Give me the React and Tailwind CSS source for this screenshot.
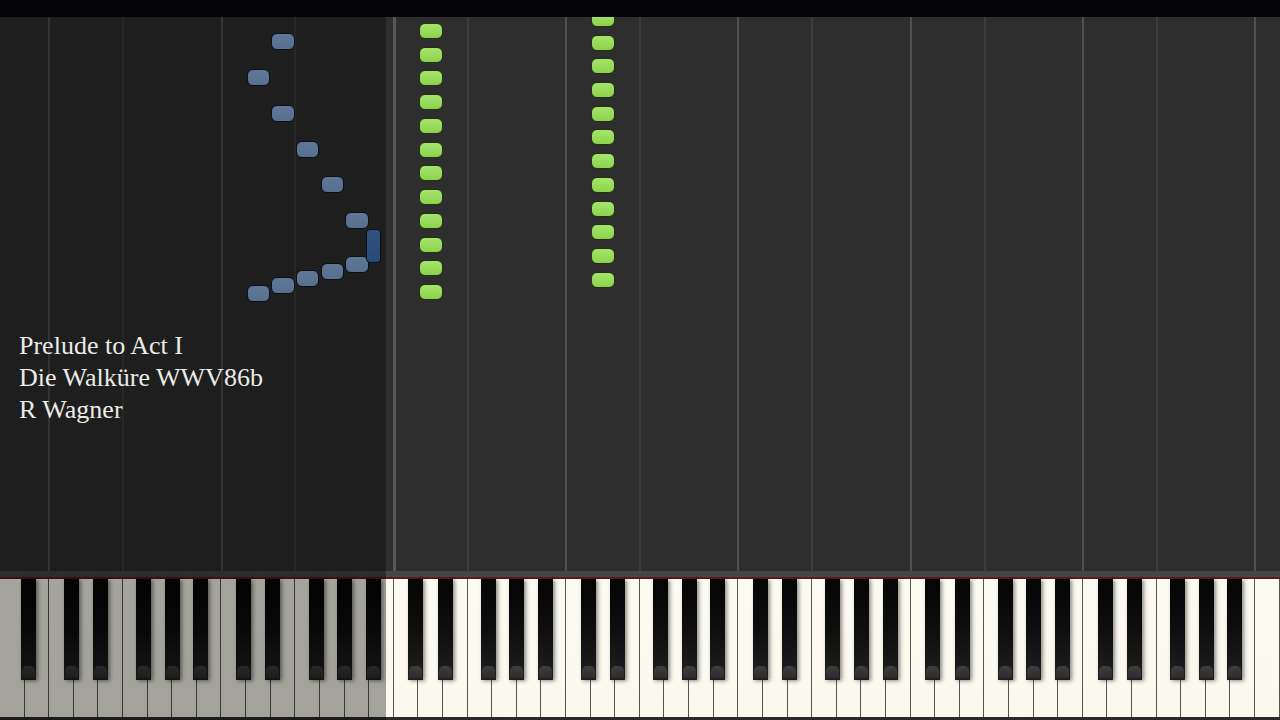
import React from "react";

const W = 1280 / 52;

const blackKeys = (() => {
  const list = [{ b: 1, s: 4 }];
  for (let n = 1; n <= 7; n++) {
    const c = 2 + 7 * (n - 1);
    list.push({ b: c + 1, s: -2.5 }, { b: c + 2, s: 2 }, { b: c + 4, s: -4 }, { b: c + 5, s: 0 }, { b: c + 6, s: 4 });
  }
  return list.map((k) => k.b * W + k.s - 7.5);
})();

const gridLines = (() => {
  const lines = [];
  for (let n = 1; n <= 8; n++) {
    const c = (2 + 7 * (n - 1)) * W;
    lines.push({ x: c, kind: n === 3 ? "m" : "c" });
    if (n <= 7) lines.push({ x: c + 3 * W, kind: "f" });
  }
  return lines;
})();

const PITCH = 23.73;

const greenNotes = [
  ...Array.from({ length: 12 }, (_, k) => ({ idx: 17, top: 6 + PITCH * k })),
  ...Array.from({ length: 12 }, (_, k) => ({ idx: 24, top: 17.5 + PITCH * (k - 1) })),
];

const blueNotes = [
  { idx: 11, top: 16 },
  { idx: 10, top: 52 },
  { idx: 11, top: 88 },
  { idx: 12, top: 124 },
  { idx: 13, top: 159 },
  { idx: 14, top: 195 },
  { idx: 14, top: 239 },
  { idx: 13, top: 246 },
  { idx: 12, top: 253 },
  { idx: 11, top: 260 },
  { idx: 10, top: 268 },
];

const lineClass = {
  c: "absolute top-0 bottom-0 w-[2px] bg-[#4f4f4f]",
  m: "absolute top-0 bottom-0 w-[3px] bg-[#585858]",
  f: "absolute top-0 bottom-0 w-[2px] bg-[#3c3c3c]",
};

function GreenNote({ idx, top }) {
  return (
    <div
      className="absolute h-[16px] rounded-[6px] border border-[#1f3310] bg-gradient-to-b from-[#a6e56c] to-[#8cd24c]"
      style={{ left: idx * W + 0.5, width: W - 1, top }}
    />
  );
}

function BlueNote({ idx, top }) {
  return (
    <div
      className="absolute h-[17px] rounded-[6px] border border-[#121a26] bg-gradient-to-b from-[#92b8e8] to-[#86acdc]"
      style={{ left: idx * W + 0.5, width: W - 1, top }}
    />
  );
}

function BlackKey({ left }) {
  return (
    <div
      className="absolute top-0 flex h-[101px] w-[15px] flex-col justify-end bg-gradient-to-b from-[#050505] via-[#0e0e0e] to-[#202020] px-[1px] pb-[2px] shadow-[2px_1px_4px_rgba(0,0,0,0.45)]"
      style={{ left }}
    >
      <div className="h-[12px] rounded-t-[5px] bg-gradient-to-b from-[#3e3e3e] to-[#2c2c2c]" />
    </div>
  );
}

export default function App() {
  return (
    <div className="relative flex h-[720px] w-[1280px] flex-col overflow-hidden bg-[#2e2e2e]" style={{ fontFamily: '"Liberation Serif", serif' }}>
      <div className="h-[17px] shrink-0 bg-[#050507]" />

      <div className="relative h-[554px] shrink-0 overflow-hidden bg-[#2e2e2e]">
        {gridLines.map((l, i) => (
          <div key={i} className={lineClass[l.kind]} style={{ left: l.x - 1 }} />
        ))}
        {greenNotes.map((n, i) => (
          <GreenNote key={"g" + i} {...n} />
        ))}
        {blueNotes.map((n, i) => (
          <BlueNote key={"b" + i} {...n} />
        ))}
        <div
          className="absolute h-[34px] w-[15px] rounded-[4px] border border-[#0e1522] bg-gradient-to-b from-[#4a7ec4] to-[#3f72b8]"
          style={{ left: 15 * W + 4 - 7.5, top: 212 }}
        />
      </div>

      <div className="h-[6px] shrink-0 bg-[#434747]" />
      <div className="h-[2px] shrink-0 bg-[#5e1a1a]" />
      <div className="relative flex h-[138px] shrink-0">
        {Array.from({ length: 52 }, (_, i) => (
          <div
            key={i}
            className="h-full flex-1 border-r border-[#55554f] bg-gradient-to-b from-[#fdfbf1] to-[#fbf9ee]"
          />
        ))}
        {blackKeys.map((left, i) => (
          <BlackKey key={i} left={left} />
        ))}
      </div>
      <div className="flex-1 bg-[#2a2a2a]" />

      <div className="pointer-events-none absolute left-0 top-[17px] bottom-0 w-[386px] bg-black/35" />

      <div className="absolute left-[19px] top-[330px] text-[26px] leading-[32px] text-[#ebebe8]">
        <div>Prelude to Act I</div>
        <div>Die Walküre WWV86b</div>
        <div>R Wagner</div>
      </div>
    </div>
  );
}
